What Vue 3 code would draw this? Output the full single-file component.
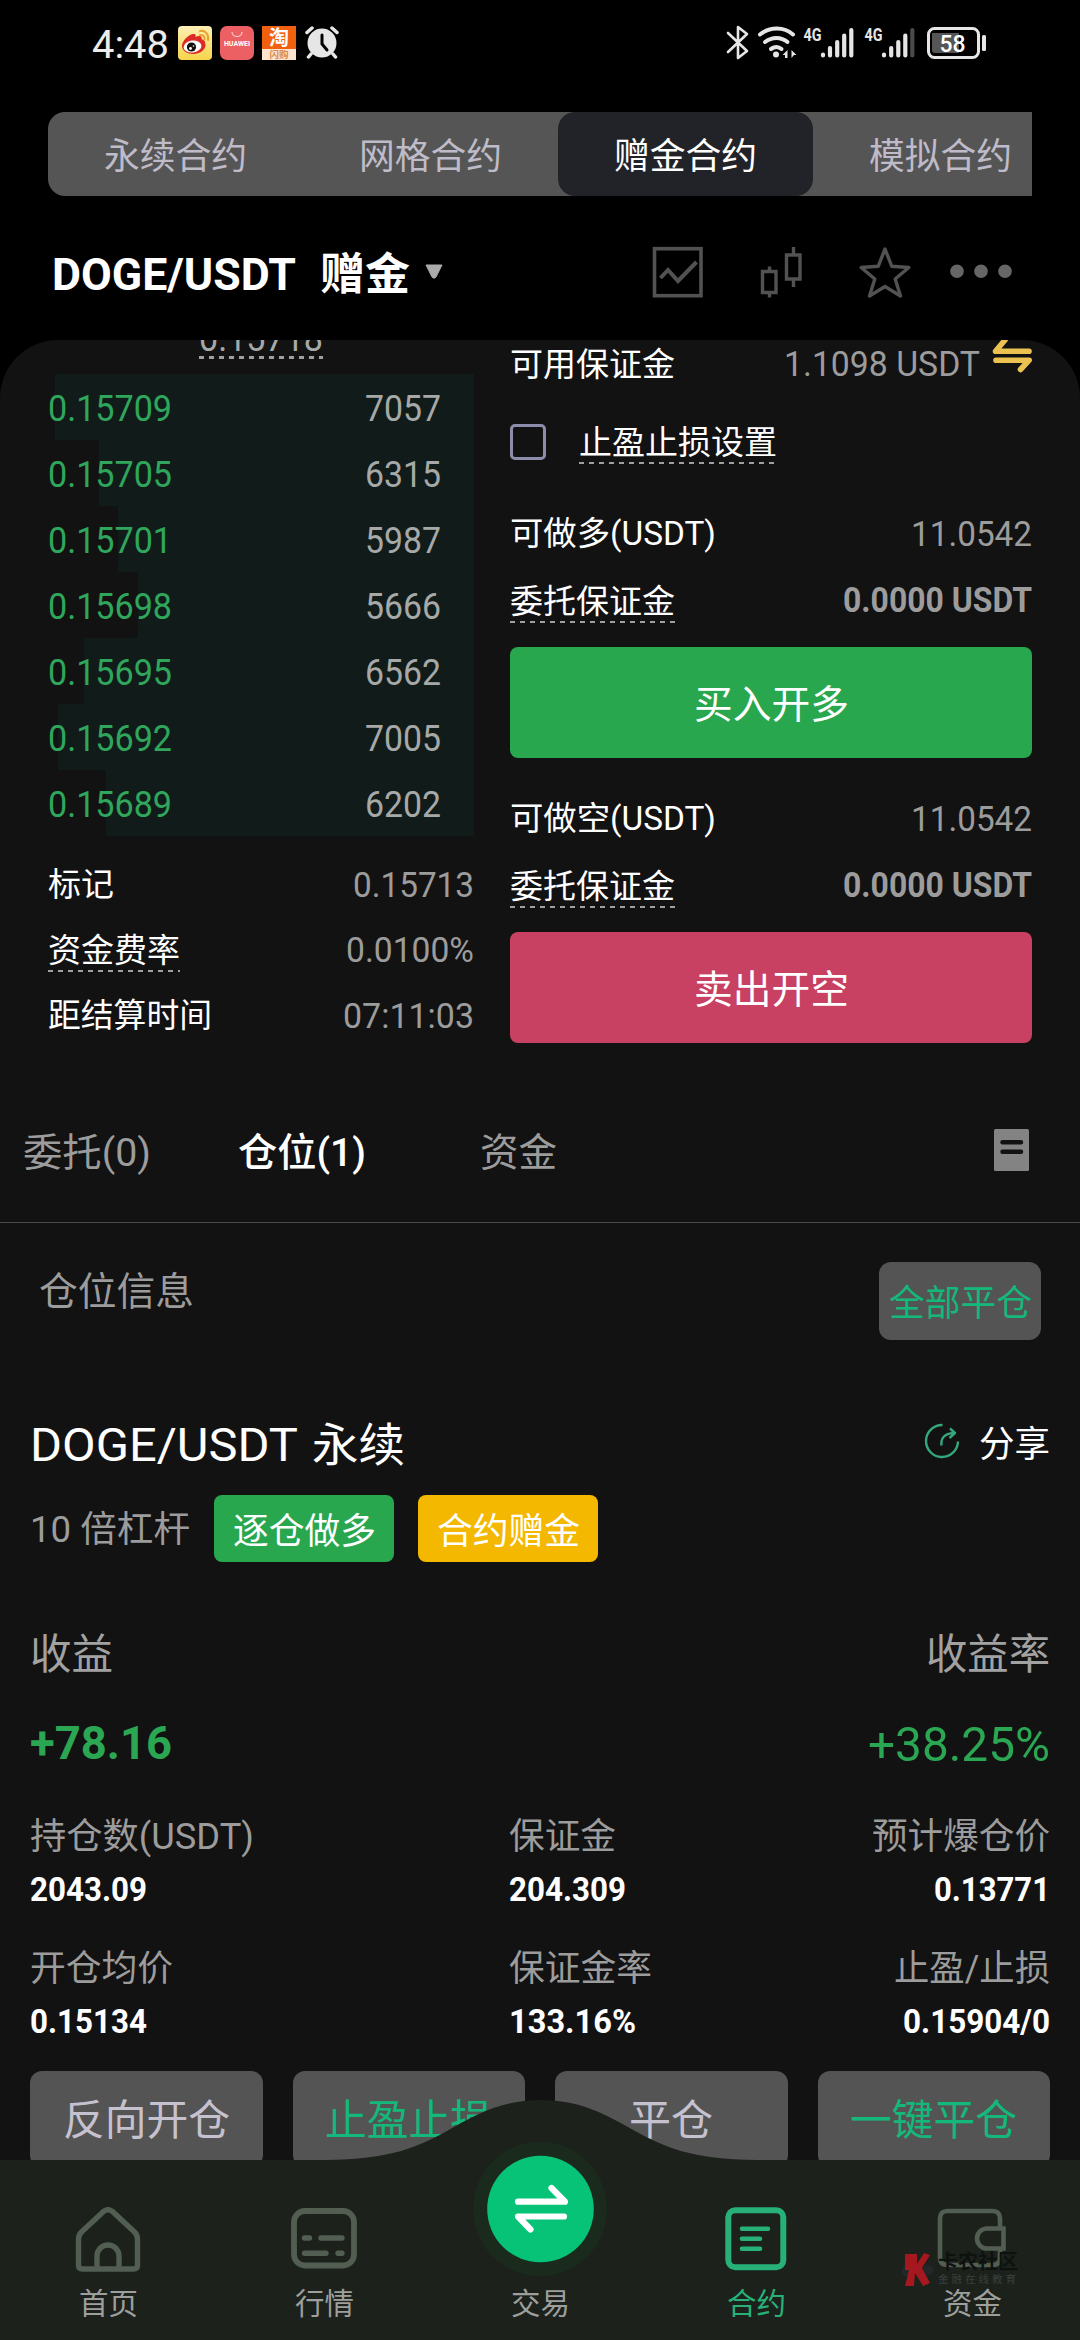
<script setup>
const marketTabs = ['永续合约', '网格合约', '赠金合约', '模拟合约']

const bids = [
  { price: '0.15709', qty: '7057', depth: 419 },
  { price: '0.15705', qty: '6315', depth: 375 },
  { price: '0.15701', qty: '5987', depth: 356 },
  { price: '0.15698', qty: '5666', depth: 336 },
  { price: '0.15695', qty: '6562', depth: 390 },
  { price: '0.15692', qty: '7005', depth: 416 },
  { price: '0.15689', qty: '6202', depth: 368 },
]

const stats = [
  { label: '标记', lw: 66, value: '0.15713', vw: 121 },
  { label: '资金费率', lw: 132, value: '0.0100%', vw: 128, hint: true },
  { label: '距结算时间', lw: 164, value: '07:11:03', vw: 131 },
]

const orders = [
  { side: 'long', label: '可做多(USDT)', action: '买入开多' },
  { side: 'short', label: '可做空(USDT)', action: '卖出开空' },
]

const details = [
  { label: '持仓数(USDT)', lw: 224, value: '2043.09', vw: 117 },
  { label: '保证金', lw: 107, value: '204.309', vw: 117 },
  { label: '预计爆仓价', lw: 178, value: '0.13771', vw: 116 },
  { label: '开仓均价', lw: 143, value: '0.15134', vw: 117 },
  { label: '保证金率', lw: 143, value: '133.16%', vw: 127 },
  { label: '止盈/止损', lw: 156, value: '0.15904/0', vw: 147 },
]

const actions = [
  { text: '反向开仓', w: 167 },
  { text: '止盈止损', w: 167, accent: true },
  { text: '平仓', w: 84 },
  { text: '一键平仓', w: 167, accent: true },
]

// Condenses or expands a label so that it occupies the given width.
const vFit = {
  mounted(el, { value }) {
    const natural = el.getBoundingClientRect().width
    el.style.transform = `scaleX(${value / natural})`
    el.style.marginRight = `${value - natural}px`
  },
}
</script>

<template>
  <div class="page">
    <div class="status">
      <span v-fit="77" class="t clock">4:48</span>
      <svg class="app" viewBox="0 0 34 34">
        <defs>
          <linearGradient id="wb" x1="0" y1="0" x2="0" y2="1">
            <stop offset="0" stop-color="#fdf0b4" />
            <stop offset="1" stop-color="#f7d449" />
          </linearGradient>
        </defs>
        <rect width="34" height="34" rx="4" fill="url(#wb)" />
        <path d="M4 20c0-5 6-11 11-12 3-.5 3 2 2.500 3 3-1.500 7-1.500 6 2 3 1 4 3 4 6 0 5-6 9-12 9S4 25 4 20z" fill="#dc2a25" />
        <ellipse cx="14.500" cy="20.500" rx="9" ry="6" fill="#fff" transform="rotate(-8 14.500 20.500)" />
        <circle cx="13.500" cy="21" r="4.600" fill="#111" />
        <circle cx="12.500" cy="22.500" r="1.400" fill="#fff" />
        <circle cx="15.500" cy="20" r=".8" fill="#fff" />
        <path d="M22 5c5-1 9 3 8 9M22 9c3-.5 5 1.500 4.500 4.500" fill="none" stroke="#eda02f" stroke-width="2" stroke-linecap="round" />
      </svg>
      <div class="app huawei">
        <svg viewBox="0 0 12 6"><path d="M1 0c0 6 10 6 10 0" fill="none" stroke="#fbd0cf" stroke-width="1.200" /></svg>
        <span>HUAWEI</span>
      </div>
      <div class="app taobao"><b>淘</b><i>闪购</i></div>
      <svg class="alarm" viewBox="0 0 34 34">
        <circle cx="17" cy="17" r="14.500" fill="#e6e6e6" />
        <path d="M2 6.500 7 2M32 6.500 27 2M6 28l-2.500 3M28 28l2.500 3" stroke="#e6e6e6" stroke-width="3.500" stroke-linecap="round" />
        <path d="M17 9v9l5 6" fill="none" stroke="#000" stroke-width="3" stroke-linecap="round" />
      </svg>
      <svg class="sys" viewBox="726 24 262 38">
        <g fill="none" stroke="#e6e6e6" stroke-linecap="round" stroke-linejoin="round">
          <path d="M728 33l19 18-9 7V27l9 7-19 18" stroke-width="2.600" />
          <path d="M760 34.500c10-8 24-8 33 0" stroke-width="4" />
          <path d="M765 42c7-5.500 16-5.500 22.500 0" stroke-width="4" />
          <path d="M771 49c3.500-2.500 7.500-2.500 10.500 0" stroke-width="4" />
        </g>
        <circle cx="776" cy="54.500" r="3" fill="#e6e6e6" />
        <path d="M787.500 50v8h-2.500v-3h-2.500zM791.500 58v-8l5 5h-2.500z" fill="#e6e6e6" />
        <g stroke="#e6e6e6" stroke-width="4.200" stroke-linecap="round">
          <path d="M823 54.500v1M830 48v7.500M837.200 42v13.500M844.200 35.500v20M851.300 30v25.500" />
          <path d="M884 54.500v1M891.200 48v7.500M898.300 42v13.500M905.300 35.500v20" />
          <path d="M912.300 30v25.500" stroke="#4a4a4a" />
        </g>
        <g fill="#e6e6e6" font-family="Roboto, sans-serif" font-weight="700">
          <text x="803.500" y="40.700" font-size="18.500" textLength="18" lengthAdjust="spacingAndGlyphs">4G</text>
          <text x="864.500" y="40.700" font-size="18.500" textLength="18" lengthAdjust="spacingAndGlyphs">4G</text>
        </g>
        <rect x="928.500" y="28.500" width="50" height="29" rx="6" fill="none" stroke="#e6e6e6" stroke-width="3" />
        <path d="M932 33h27v20h-24a3 3 0 0 1-3-3z" fill="#555" />
        <rect x="982" y="35" width="4" height="16" rx="1.500" fill="#e6e6e6" />
        <text x="939.500" y="51.500" font-size="24" font-weight="500" fill="#fff" font-family="Roboto, sans-serif" textLength="26" lengthAdjust="spacingAndGlyphs">58</text>
      </svg>
    </div>

    <div class="markets">
      <div v-for="(m, i) in marketTabs" :key="m" class="market" :class="{ on: i === 2 }">
        <span v-fit="143" class="t">{{ m }}</span>
      </div>
    </div>

    <div class="pair">
      <span v-fit="244" class="t name">DOGE/USDT</span>
      <span v-fit="90" class="t gift">赠金</span>
      <svg class="caret" viewBox="0 0 20 16"><path d="M2 1h16L12 13q-2 2.500-4 0z" fill="#aaa" stroke="#aaa" stroke-linejoin="round" /></svg>
      <svg class="tools" viewBox="650 244 364 56" fill="none" stroke="#525252">
        <rect x="654.500" y="248.700" width="46.500" height="47" stroke-width="3.600" />
        <path d="M660.500 278l7.500-8 10 11 18.500-19" stroke-width="4" />
        <path d="M762.500 271.500h13.500v21h-13.500zM769.500 266.500v5M769.500 292.500v5M786.500 255h13.500v24h-13.500zM793.500 247v8M793.500 279v8" stroke-width="3.400" />
        <path d="M885 249l6.800 17.300 17 1.200-13.600 11.500 5.300 17-15.500-9.500-15.500 9.500 5.300-17-13.600-11.500 17-1.200z" stroke-width="3.400" stroke-linejoin="round" />
        <g fill="#666" stroke="none"><circle cx="957" cy="271.300" r="6.800" /><circle cx="981" cy="271.300" r="6.800" /><circle cx="1005" cy="271.300" r="6.800" /></g>
      </svg>
    </div>

    <main class="panel">
      <section class="trade">
        <div class="book">
          <div class="last dash"><span v-fit="124" class="t num">0.15718</span></div>
          <div v-for="b in bids" :key="b.price" class="bid">
            <div class="depth" :style="{ width: b.depth + 'px' }"></div>
            <span v-fit="124" class="t num price">{{ b.price }}</span>
            <span v-fit="76" class="t num">{{ b.qty }}</span>
          </div>
          <div class="stats">
            <div v-for="s in stats" :key="s.label" class="row">
              <div :class="{ dash: s.hint }"><span v-fit="s.lw" class="t lab">{{ s.label }}</span></div>
              <span v-fit="s.vw" class="t val">{{ s.value }}</span>
            </div>
          </div>
        </div>

        <div class="form">
          <div class="row avail">
            <span v-fit="165" class="t lab">可用保证金</span>
            <span class="money"><span v-fit="196" class="t val">1.1098 USDT</span>
              <svg viewBox="992 334 42 40" fill="none" stroke="#ebc24f" stroke-width="5.600" stroke-linecap="round" stroke-linejoin="round">
                <path d="M1029 351.300H995.500L1005 340M996 360.200h33.200L1020.500 369.500" />
              </svg>
            </span>
          </div>
          <div class="tpsl">
            <span class="box"></span>
            <div class="dash"><span v-fit="198" class="t lab">止盈止损设置</span></div>
          </div>
          <template v-for="o in orders" :key="o.side">
            <div class="row can">
              <span v-fit="206" class="t lab">{{ o.label }}</span>
              <span v-fit="121" class="t val">11.0542</span>
            </div>
            <div class="row margin">
              <div class="dash"><span v-fit="165" class="t lab">委托保证金</span></div>
              <span v-fit="189" class="t val strong">0.0000 USDT</span>
            </div>
            <button class="submit" :class="o.side"><span v-fit="155" class="t">{{ o.action }}</span></button>
          </template>
        </div>
      </section>

      <nav class="tabs">
        <span v-fit="128" class="t">委托(0)</span>
        <span v-fit="128" class="t on">仓位(1)</span>
        <span v-fit="77" class="t">资金</span>
        <svg viewBox="0 0 35 42"><rect width="35" height="42" rx="1.500" fill="#838383" /><path d="M8.500 13.300h18.500M8.500 22.800h18.500" stroke="#121212" stroke-width="4.500" stroke-linecap="round" /></svg>
      </nav>

      <div class="head">
        <span v-fit="155" class="t">仓位信息</span>
        <button><span v-fit="143" class="t">全部平仓</span></button>
      </div>

      <section class="position">
        <div class="title">
          <span v-fit="268" class="t">DOGE/USDT</span>
          <span v-fit="93" class="t perp">永续</span>
          <svg viewBox="0 0 36 36" fill="none" stroke="#35a87b" stroke-width="2.400">
            <path d="M18.500 2A16 16 0 1 0 34 18.500" />
            <path d="M17.500 22.500c-1-7 3-12 12-12.500M26 5.500l5 4.500-5.500 5" stroke-linejoin="round" />
          </svg>
          <span v-fit="71" class="t share">分享</span>
        </div>
        <div class="tags">
          <span v-fit="160" class="t lever">10 倍杠杆</span>
          <span class="tag iso"><span v-fit="143" class="t">逐仓做多</span></span>
          <span class="tag bonus"><span v-fit="143" class="t">合约赠金</span></span>
        </div>
        <div class="profit heads">
          <span v-fit="83" class="t">收益</span>
          <span v-fit="124" class="t">收益率</span>
        </div>
        <div class="profit nums">
          <span v-fit="142" class="t pnl">+78.16</span>
          <span v-fit="182" class="t roe">+38.25%</span>
        </div>
        <div class="grid">
          <div v-for="d in details" :key="d.label" class="cell">
            <span v-fit="d.lw" class="t k">{{ d.label }}</span>
            <span v-fit="d.vw" class="t v">{{ d.value }}</span>
          </div>
        </div>
        <div class="actions">
          <button v-for="a in actions" :key="a.text" :class="{ accent: a.accent }">
            <span v-fit="a.w" class="t">{{ a.text }}</span>
          </button>
        </div>
      </section>
    </main>

    <footer class="dock">
      <svg class="hump" viewBox="0 0 1080 240">
        <path d="M0 60H325C390 60 420 46 447 31C477 14 502 0 541 0S605 14 635 31C662 46 692 60 757 60H1080V240H0z" fill="#1c211c" />
      </svg>
      <div class="items">
        <div class="item">
          <svg viewBox="0 0 70 66" fill="none" stroke="#525e52" stroke-width="5.400" stroke-linejoin="round">
            <path d="M30.500 4.500q4.500-3.500 9 0L61.500 25q3 3 3 7V58q0 4-4 4H9.500q-4 0-4-4V32q0-4 3-7z" />
            <path d="M24 62V49a11 11 0 0 1 22 0V62" />
          </svg>
          <span v-fit="59" class="t">首页</span>
        </div>
        <div class="item">
          <svg viewBox="0 0 70 66" fill="none" stroke="#525e52">
            <rect x="5" y="4" width="60" height="54.500" rx="11" stroke-width="5.800" />
            <path d="M15.500 31h5M32 31h21M15.500 46.300h21.500M49 46.300h4" stroke-width="5.400" stroke-linecap="round" />
          </svg>
          <span v-fit="59" class="t">行情</span>
        </div>
        <div class="item swap">
          <svg viewBox="0 0 136 136">
            <circle cx="68" cy="68" r="67" fill="#1a2b1d" />
            <circle cx="68.500" cy="68" r="53.300" fill="#07c377" />
            <path d="M46 60.700H93L79.500 47M92 75.500H46L58.500 88.500" fill="none" stroke="#fff" stroke-width="6.200" stroke-linecap="round" stroke-linejoin="round" />
          </svg>
          <span v-fit="59" class="t">交易</span>
        </div>
        <div class="item on">
          <svg viewBox="0 0 70 66" fill="none" stroke="#27b178">
            <rect x="7.300" y="3.300" width="55" height="57" rx="7" stroke-width="6" />
            <path d="M21 21.700h26M21 31.700h18M21 41.700h18" stroke-width="4.600" stroke-linecap="round" />
          </svg>
          <span v-fit="59" class="t">合约</span>
        </div>
        <div class="item">
          <svg viewBox="0 0 70 66" fill="none" stroke="#525e52" stroke-width="4.600">
            <path d="M63 21V11.500Q63 4 55.500 4H10.500Q3 4 3 11.500V50.500Q3 58 10.500 58H55.500Q63 58 63 50.500V41.500" />
            <path d="M66.500 21.500H50a10 10 0 0 0 0 20H66.500z" />
          </svg>
          <span v-fit="59" class="t">资金</span>
        </div>
      </div>
      <div class="mark">
        <svg viewBox="0 0 32 36">
          <circle cx="5" cy="19" r="5.500" fill="#22282a" /><circle cx="26" cy="18" r="5.500" fill="#22282a" />
          <path d="M3 2h12v10L22 1l6 2-8 13 8 15-7 3-8-13-1 13H3l4-16H3z" fill="#a5181f" />
        </svg>
        <div><b>卡农社区</b><i>金融在线教育</i></div>
      </div>
    </footer>
  </div>
</template>

<style>
body {
  background: #000;
}
</style>

<style scoped>
.page {
  position: relative;
  display: flex;
  flex-direction: column;
  width: 1080px;
  height: 2340px;
  overflow: hidden;
  background: #000;
  color: #fff;
  font-family: Roboto, 'Noto Sans CJK SC', sans-serif;
}
svg {
  display: block;
  flex: none;
}
button {
  display: flex;
  align-items: center;
  justify-content: center;
  padding: 0;
  border: 0;
  font-family: inherit;
}
.t {
  display: inline-block;
  flex: none;
  padding-top: 3px;
  white-space: nowrap;
  line-height: 1.2;
  transform-origin: 0 50%;
}
.status {
  display: flex;
  align-items: center;
  height: 86px;
  margin-bottom: 26px;
  padding-left: 92px;
}
.clock {
  padding-top: 5px;
  font-size: 39px;
  color: #ececec;
}
.app {
  width: 34px;
  height: 34px;
  margin-left: 8px;
}
.clock + .app {
  margin-left: 9px;
}
.huawei {
  display: flex;
  flex-direction: column;
  align-items: center;
  border-radius: 7px;
  background: #ec5f62;
}
.huawei svg {
  width: 12px;
  height: 6px;
  margin-top: 6px;
}
.huawei span {
  margin-top: 2px;
  font-size: 7px;
  font-weight: 700;
  line-height: 9px;
}
.taobao {
  display: flex;
  flex-direction: column;
  align-items: center;
  background: linear-gradient(#f0600f 67%, #fbe3cd 67%);
}
.taobao b {
  font-size: 20px;
  line-height: 24px;
}
.taobao i {
  font-size: 9.500px;
  font-style: normal;
  font-weight: 700;
  line-height: 10px;
  color: #d98a4e;
}
.alarm {
  width: 34px;
  height: 34px;
  margin-left: 9px;
}
.sys {
  width: 262px;
  height: 38px;
  margin-left: 387px;
}
.markets {
  display: flex;
  height: 84px;
  margin: 0 48px;
  overflow: hidden;
  border-radius: 17px 0 0 17px;
  background: #555;
}
.market {
  display: flex;
  flex: none;
  align-items: center;
  justify-content: center;
  width: 255px;
  padding-top: 4px;
  box-sizing: border-box;
  font-size: 36px;
  color: #bfbbc8;
}
.market.on {
  border-radius: 17px;
  background: #212328;
  color: #fff;
}
.pair {
  display: flex;
  align-items: center;
  height: 144px;
  padding: 8px 0 0 52px;
  box-sizing: border-box;
}
.name,
.gift {
  padding-top: 8px;
  font-size: 44.500px;
  font-weight: 700;
}
.gift {
  margin-left: 24px;
}
.caret {
  width: 20px;
  height: 16px;
  margin-left: 14px;
}
.tools {
  width: 364px;
  height: 56px;
  margin-left: 206px;
}
.panel {
  flex: 1;
  min-height: 0;
  overflow: hidden;
  border-radius: 58px 58px 0 0;
  background: #121212;
}
.trade {
  display: flex;
  height: 744px;
}
.book {
  width: 426px;
  margin: 0 36px 0 48px;
}
.num {
  padding-top: 4px;
  font-size: 36.500px;
  font-weight: 450;
  color: #a6a9a7;
}
.dash {
  display: flex;
  align-items: center;
  background: repeating-linear-gradient(90deg, #a0a0a0 0 5px, transparent 5px 10px) 0 100% / 100% 2px no-repeat;
}
.last {
  width: 124px;
  height: 42px;
  margin: -23px auto 15px;
  background-size: 100% 3px;
}
.last .t {
  margin-top: -2px;
}
.bid {
  display: grid;
  grid-template-columns: 1fr auto;
  align-items: center;
  height: 66px;
  padding-right: 33px;
}
.bid > * {
  grid-row: 1;
}
.bid .depth {
  grid-column: 1 / 3;
  justify-self: end;
  height: 66px;
  margin-right: -33px;
  background: #111c1a;
}
.bid .num {
  z-index: 1;
  justify-self: start;
  grid-column: 2;
}
.bid .price {
  grid-column: 1;
  color: #2fa65c;
}
.stats {
  padding-top: 16px;
}
.row {
  display: flex;
  align-items: center;
  justify-content: space-between;
}
.stats .row {
  height: 65.500px;
}
.stats .t {
  padding-top: 1px;
}
.lab {
  padding-top: 2px;
  font-size: 33px;
  line-height: 42px;
}
.val {
  font-size: 34.500px;
  font-weight: 400;
  color: #9c9c9c;
}
.form {
  width: 522px;
}
.avail {
  height: 47px;
}
.money {
  display: flex;
  align-items: center;
}
.money svg {
  width: 42px;
  height: 40px;
  margin: -18px -2px 0 12px;
}
.tpsl {
  display: flex;
  align-items: center;
  height: 109px;
}
.box {
  width: 30px;
  height: 30px;
  margin-right: 33px;
  border: 3px solid #8d8dab;
  border-radius: 5px;
}
.can {
  height: 74px;
}
.margin {
  height: 61px;
}
.strong {
  padding-top: 0;
  font-weight: 700;
}
.submit {
  width: 522px;
  height: 111px;
  margin: 16px 0 23px;
  border-radius: 8px;
  color: #fff;
  font-size: 39px;
}
.submit .t {
  padding-top: 6px;
}
.long {
  background: #28a74f;
}
.short {
  background: #c84062;
}
.tabs {
  display: flex;
  align-items: center;
  height: 138px;
  padding: 0 51px 0 23px;
  border-bottom: 1px solid #4b4b4b;
  font-size: 39px;
  color: #9c9c9c;
}
.tabs .t {
  padding-top: 1px;
}
.tabs .t + .t {
  margin-left: 87px;
}
.tabs .on + .t {
  margin-left: 114px;
}
.tabs .on {
  color: #fff;
  font-weight: 500;
}
.tabs svg {
  width: 35px;
  height: 42px;
  margin: -7px 0 0 auto;
}
.head {
  display: flex;
  align-items: flex-start;
  justify-content: space-between;
  padding: 39px 39px 0;
  font-size: 39px;
  color: #9c9c9c;
}
.head > .t {
  padding-top: 1px;
  line-height: 58px;
}
.head button {
  width: 162px;
  height: 78px;
  padding-top: 4px;
  box-sizing: border-box;
  border-radius: 12px;
  background: #545454;
  color: #14b87a;
  font-size: 36px;
}
.position {
  padding: 72px 30px 0;
}
.title {
  display: flex;
  align-items: center;
  height: 64px;
  font-size: 47px;
}
.perp {
  margin-left: 14px;
  font-size: 46px;
}
.title svg {
  width: 36px;
  height: 36px;
  margin: -6px 19px 0 auto;
}
.share {
  font-size: 36px;
}
.tags {
  display: flex;
  align-items: center;
  height: 67px;
  margin-top: 19px;
}
.lever {
  padding-top: 5px;
  font-size: 36px;
  color: #9c9c9c;
}
.tag {
  display: flex;
  align-items: center;
  justify-content: center;
  width: 180px;
  height: 67px;
  margin-left: 24px;
  padding-top: 5px;
  box-sizing: border-box;
  border-radius: 8px;
  font-size: 36px;
}
.iso {
  background: #28a74f;
}
.bonus {
  background: #f4b800;
}
.profit {
  display: flex;
  align-items: center;
  justify-content: space-between;
  height: 60px;
}
.heads {
  margin-top: 61px;
  font-size: 41.500px;
  color: #a2a2a2;
}
.nums {
  margin-top: 30px;
  color: #2ba653;
}
.pnl {
  padding-top: 1px;
  font-size: 46px;
  font-weight: 700;
}
.roe {
  padding-top: 5px;
  font-size: 48.500px;
}
.grid {
  display: grid;
  grid-template-columns: 479px 1fr auto;
  row-gap: 39px;
  margin-top: 43px;
}
.cell {
  display: flex;
  flex-direction: column;
  align-items: flex-start;
  gap: 12px;
}
.cell:nth-child(3n) {
  align-items: flex-end;
}
.k,
.v {
  padding-top: 0;
  line-height: 40px;
}
.k {
  padding-top: 1px;
  font-size: 36px;
  color: #9c9c9c;
}
.v {
  font-size: 34px;
  font-weight: 700;
}
.actions {
  display: grid;
  grid-template-columns: repeat(4, 1fr);
  gap: 30px;
  margin-top: 30px;
}
.actions button {
  height: 96px;
  border-radius: 12px;
  background: #545454;
  color: #c5c1cf;
  font-size: 42px;
}
.actions .t {
  padding-top: 5px;
}
.actions .accent {
  color: #14b87a;
}
.dock {
  position: absolute;
  left: 0;
  bottom: 0;
  width: 1080px;
  height: 240px;
}
.hump {
  width: 1080px;
  height: 240px;
}
.items {
  position: absolute;
  inset: 0;
  display: grid;
  grid-template-columns: repeat(5, 1fr);
}
.item {
  display: flex;
  flex-direction: column;
  align-items: center;
  padding-top: 107px;
  font-size: 29.500px;
  color: #9c9f9c;
}
.item svg {
  width: 70px;
  height: 66px;
}
.item .t {
  margin-top: 13px;
  padding-top: 1px;
}
.swap {
  padding-top: 41px;
}
.swap svg {
  width: 136px;
  height: 136px;
}
.swap .t {
  margin-top: 9px;
}
.item.on {
  color: #27b178;
}
.mark {
  position: absolute;
  left: 902px;
  top: 152px;
  display: flex;
  gap: 4px;
}
.mark svg {
  width: 32px;
  height: 36px;
}
.mark div {
  display: flex;
  flex-direction: column;
  white-space: nowrap;
}
.mark b {
  font-size: 20px;
  line-height: 21px;
  color: #0e120f;
}
.mark i {
  font-size: 10.500px;
  font-style: normal;
  letter-spacing: 3px;
  line-height: 13px;
  color: #3a403b;
}
</style>
